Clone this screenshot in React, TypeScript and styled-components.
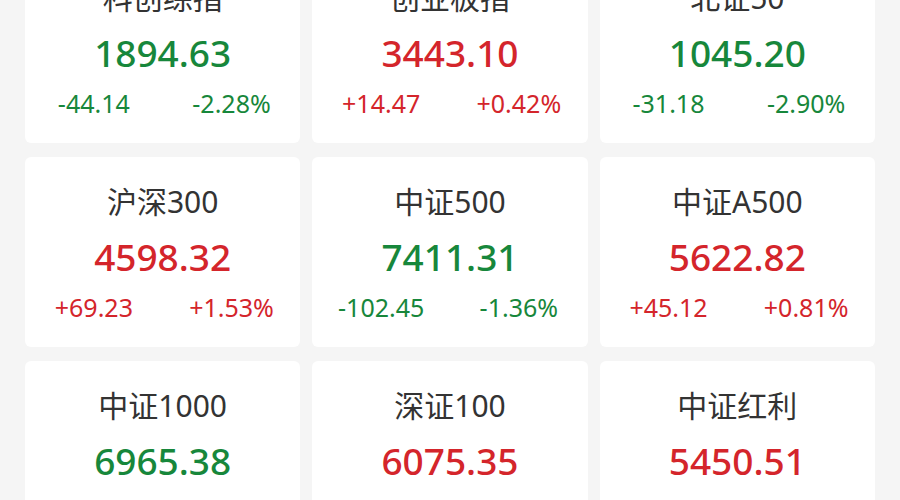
import { useLayoutEffect, useRef } from 'react'
import type { FC } from 'react'
import { styled, createGlobalStyle } from 'styled-components'

const GlobalStyle = createGlobalStyle`
  html, body {
    margin: 0;
    padding: 0;
    background: #f5f5f5;
    font-family: 'Noto Sans', 'Noto Sans CJK SC', sans-serif;
  }
`

const Viewport = styled.div`
  height: 100vh;
  overflow: hidden;
  background: #f5f5f5;
`

const Grid = styled.div`
  display: grid;
  grid-template-columns: repeat(3, 1fr);
  column-gap: 12px;
  row-gap: 14px;
  padding: 14px 25px;
`

const Card = styled.div`
  height: 190px;
  box-sizing: border-box;
  padding-top: 27px;
  background: #fff;
  border-radius: 6px;
  display: flex;
  flex-direction: column;
  align-items: center;
`

const Name = styled.div`
  font-size: 30px;
  line-height: 36px;
  color: #333;
  font-family: 'Noto Sans', 'Noto Sans CJK SC', sans-serif;
`

const Price = styled.div<{ $up: boolean }>`
  margin-top: 12px;
  font-size: 37px;
  line-height: 50px;
  font-weight: 500;
  color: ${(p) => (p.$up ? '#d4252b' : '#17873b')};
`

const ChangeRow = styled.div<{ $up: boolean }>`
  margin-top: 10px;
  width: 100%;
  display: flex;
  font-size: 25px;
  line-height: 30px;
  color: ${(p) => (p.$up ? '#d4252b' : '#17873b')};
`

const ChangeCell = styled.span`
  flex: 1;
  text-align: center;
`

interface IndexQuote {
  name: string
  price: string
  change: string
  pct: string
}

const quotes: IndexQuote[] = [
  { name: '科创综指', price: '1894.63', change: '-44.14', pct: '-2.28%' },
  { name: '创业板指', price: '3443.10', change: '+14.47', pct: '+0.42%' },
  { name: '北证50', price: '1045.20', change: '-31.18', pct: '-2.90%' },
  { name: '沪深300', price: '4598.32', change: '+69.23', pct: '+1.53%' },
  { name: '中证500', price: '7411.31', change: '-102.45', pct: '-1.36%' },
  { name: '中证A500', price: '5622.82', change: '+45.12', pct: '+0.81%' },
  { name: '中证1000', price: '6965.38', change: '-103.17', pct: '-1.46%' },
  { name: '深证100', price: '6075.35', change: '+25.60', pct: '+0.42%' },
  { name: '中证红利', price: '5450.51', change: '+18.43', pct: '+0.34%' },
]

const QuoteCard: FC<{ quote: IndexQuote }> = ({ quote }) => {
  const up = quote.change.startsWith('+')
  return (
    <Card>
      <Name>{quote.name}</Name>
      <Price $up={up}>{quote.price}</Price>
      <ChangeRow $up={up}>
        <ChangeCell>{quote.change}</ChangeCell>
        <ChangeCell>{quote.pct}</ChangeCell>
      </ChangeRow>
    </Card>
  )
}

const App: FC = () => {
  const viewRef = useRef<HTMLDivElement>(null)

  // list is scrolled a bit past the first row
  useLayoutEffect(() => {
    if (viewRef.current) viewRef.current.scrollTop = 61
  }, [])

  return (
    <>
      <GlobalStyle />
      <Viewport ref={viewRef}>
        <Grid>
          {quotes.map((q) => (
            <QuoteCard key={q.name} quote={q} />
          ))}
        </Grid>
      </Viewport>
    </>
  )
}

export default App
